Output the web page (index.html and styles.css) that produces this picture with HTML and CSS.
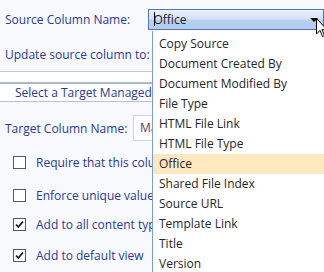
FILE: index.html
```html
<!DOCTYPE html>
<html>
<head>
<meta charset="utf-8">
<link rel="stylesheet" href="styles.css">
</head>
<body>
<div class="page">
  <div class="top">
    <div class="row row-source">
      <span class="label">Source Column Name:</span>
      <div class="select">
        <span class="select-text"><span class="caret"></span>Office</span>
        <span class="select-arrow"></span>
      </div>
    </div>
    <div class="row row-update">
      <span class="label">Update source column to:</span>
    </div>
  </div>
  <div class="gap"></div>
  <div class="header">Select a Target Managed Metadata Column</div>
  <div class="row row-target">
    <span class="label">Target Column Name:</span>
    <div class="input">Managed Metadata</div>
  </div>
  <div class="checks">
    <label class="check"><span class="box"></span><span class="label">Require that this column contains information</span></label>
    <label class="check"><span class="box"></span><span class="label">Enforce unique values</span></label>
    <label class="check"><span class="box checked"><svg viewBox="0 0 11 11" width="11" height="11"><path d="M2 5.5 L4.3 8 L9 2.5" fill="none" stroke="#1a1a2e" stroke-width="1.8"/></svg></span><span class="label">Add to all content types</span></label>
    <label class="check"><span class="box checked"><svg viewBox="0 0 11 11" width="11" height="11"><path d="M2 5.5 L4.3 8 L9 2.5" fill="none" stroke="#1a1a2e" stroke-width="1.8"/></svg></span><span class="label">Add to default view</span></label>
  </div>
</div>
<ul class="popup">
  <li>Copy Source</li>
  <li>Document Created By</li>
  <li>Document Modified By</li>
  <li>File Type</li>
  <li>HTML File Link</li>
  <li>HTML File Type</li>
  <li class="active">Office</li>
  <li>Shared File Index</li>
  <li>Source URL</li>
  <li>Template Link</li>
  <li>Title</li>
  <li>Version</li>
</ul>
<svg class="cursor" width="12" height="20" viewBox="0 0 12 20"><path d="M0.5 0.5 L0.5 16 L4 12.5 L6.5 18.5 L8.5 17.6 L6 11.7 L11 11.7 Z" fill="#fff" stroke="#000" stroke-width="1"/></svg>
</body>
</html>
```
FILE: styles.css
```css
html, body {
  margin: 0;
  padding: 0;
}
body {
  width: 324px;
  height: 272px;
  overflow: hidden;
  background: #f7f9fc;
  font-family: "Open Sans", "Noto Sans", sans-serif;
  font-size: 12px;
  color: #2b3a92;
  position: relative;
}
.page {
  width: 324px;
}
.top {
  padding-top: 9px;
  border-bottom: 1px solid #c3cad6;
}
.row {
  display: flex;
  align-items: center;
  padding-left: 5px;
}
.row-source {
  height: 21px;
}
.row-source .label {
  width: 147px;
}
.row-update {
  height: 34px;
  padding-top: 7px;
}
.label {
  white-space: nowrap;
}
.select {
  width: 180px;
  height: 19px;
  border: 1px solid #4f77b8;
  background: linear-gradient(#eaf0fa 0%, #d6e3f7 45%, #b9cfef 55%, #b3cbf0 100%);
  display: flex;
  align-items: center;
  position: relative;
  color: #1c1c2c;
}
.select-text {
  padding-left: 5px;
  position: relative;
}
.caret {
  position: absolute;
  left: 5px;
  top: 1px;
  width: 1px;
  height: 14px;
  background: #000;
}
.select-arrow {
  position: absolute;
  left: 161px;
  top: 8px;
  width: 0;
  height: 0;
  border-left: 4px solid transparent;
  border-right: 4px solid transparent;
  border-top: 4px solid #000;
}
.gap {
  height: 10px;
  background: #ffffff;
}
.header {
  background: #ffffff;
  border-top: 2px solid #adb6c4;
  border-bottom: 1px solid #b9c1ce;
  height: 17px;
  line-height: 17px;
  padding-left: 15px;
  white-space: nowrap;
  overflow: hidden;
}
.row-target {
  margin-top: 13px;
  height: 26px;
}
.row-target .label {
  width: 128px;
}
.input {
  height: 24px;
  width: 160px;
  border: 1px solid #cfd6e2;
  background: #fff;
  line-height: 24px;
  padding-left: 6px;
  color: #5a3c66;
  white-space: nowrap;
  overflow: hidden;
  box-sizing: content-box;
}
.checks {
  display: flex;
  flex-direction: column;
  padding-left: 13px;
  margin-top: 13px;
}
.check {
  display: flex;
  align-items: center;
  height: 17px;
  white-space: nowrap;
}
.check:nth-child(2) { margin-top: 16px; }
.check:nth-child(3) { margin-top: 12px; }
.check:nth-child(4) { margin-top: 14px; }
.box {
  width: 11px;
  height: 11px;
  border: 1px solid #5a5a5a;
  background: #fff;
  margin-right: 10px;
  display: flex;
  align-items: center;
  justify-content: center;
  flex: none;
}
.popup {
  position: absolute;
  left: 152px;
  top: 31px;
  bottom: 0;
  width: 180px;
  margin: 0;
  padding: 3px 0 0 0;
  list-style: none;
  background: #fff;
  border-left: 1px solid #7f9fc9;
  color: #262626;
  overflow: hidden;
}
.popup li {
  height: 20px;
  line-height: 20px;
  padding-left: 6px;
  white-space: nowrap;
}
.popup li.active {
  background: #fde8c0;
}
.cursor {
  position: absolute;
  left: 316px;
  top: 18px;
}
```
